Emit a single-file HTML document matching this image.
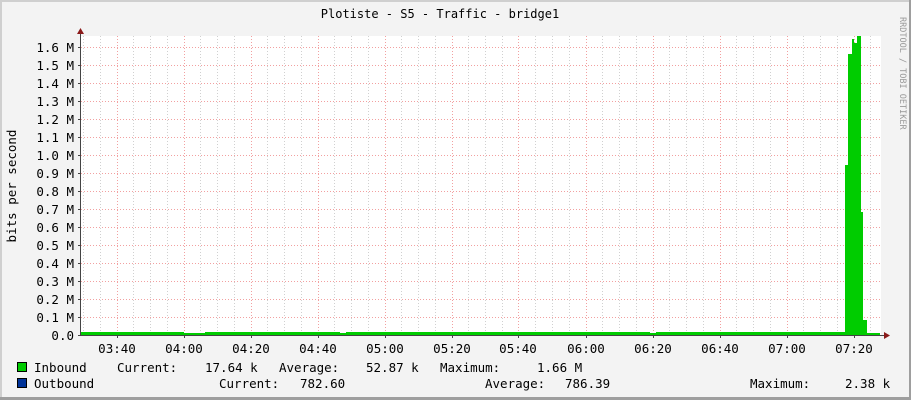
<!DOCTYPE html>
<html><head><meta charset="utf-8"><style>
html,body{margin:0;padding:0;background:#f3f3f3}
svg{display:block}
text{font-family:"DejaVu Sans Mono","Liberation Mono",monospace;font-size:12.5px;fill:#000}
</style></head><body>
<svg width="911" height="400" xmlns="http://www.w3.org/2000/svg">
<rect x="0" y="0" width="911" height="400" fill="#f3f3f3"/>
<rect x="0" y="0" width="911" height="2" fill="#cfcfcf"/>
<rect x="0" y="0" width="2" height="400" fill="#cfcfcf"/>
<rect x="909" y="0" width="2" height="400" fill="#9e9e9e"/>
<rect x="0" y="397" width="911" height="3" fill="#9e9e9e"/>
<rect x="81" y="36" width="800" height="299" fill="#fff"/>
<g stroke="#d0d0d0" stroke-dasharray="1,2" shape-rendering="crispEdges">
<path d="M83.5 36V335M100.5 36V335M133.5 36V335M150.5 36V335M167.5 36V335M200.5 36V335M217.5 36V335M234.5 36V335M267.5 36V335M284.5 36V335M301.5 36V335M334.5 36V335M351.5 36V335M368.5 36V335M401.5 36V335M418.5 36V335M435.5 36V335M468.5 36V335M485.5 36V335M502.5 36V335M535.5 36V335M552.5 36V335M569.5 36V335M602.5 36V335M619.5 36V335M636.5 36V335M669.5 36V335M686.5 36V335M703.5 36V335M736.5 36V335M753.5 36V335M770.5 36V335M803.5 36V335M820.5 36V335M837.5 36V335M870.5 36V335"/>
</g>
<g stroke="#f2a0a0" stroke-dasharray="1,2" shape-rendering="crispEdges">
<path d="M117.5 36V335M184.5 36V335M251.5 36V335M318.5 36V335M385.5 36V335M452.5 36V335M518.5 36V335M586.5 36V335M653.5 36V335M720.5 36V335M787.5 36V335M854.5 36V335"/>
<path d="M81 47.5H881M81 65.5H881M81 83.5H881M81 101.5H881M81 119.5H881M81 137.5H881M81 155.5H881M81 173.5H881M81 191.5H881M81 209.5H881M81 227.5H881M81 245.5H881M81 263.5H881M81 281.5H881M81 299.5H881M81 317.5H881"/>
</g>
<path fill="#00cc00" d="M81 332H184V333H205V332H340V333H346V332H650V333H656V332H845V165H848V54H852V39H854V43H857V36H861V212H863V320H867V333H880V335H81Z"/>
<g stroke="#444" shape-rendering="crispEdges">
<path d="M80.5 33V336M78 335.5H884"/>
<path d="M78 47.5h3M78 65.5h3M78 83.5h3M78 101.5h3M78 119.5h3M78 137.5h3M78 155.5h3M78 173.5h3M78 191.5h3M78 209.5h3M78 227.5h3M78 245.5h3M78 263.5h3M78 281.5h3M78 299.5h3M78 317.5h3"/>
<path d="M117.5 335v3M184.5 335v3M251.5 335v3M318.5 335v3M385.5 335v3M452.5 335v3M518.5 335v3M586.5 335v3M653.5 335v3M720.5 335v3M787.5 335v3M854.5 335v3"/>
</g>
<path d="M77 34L80.5 28L84 34Z" fill="#8b1a1a"/>
<path d="M884 332L890 335.5L884 339Z" fill="#8b1a1a"/>
<text x="440" y="18" text-anchor="middle" style="font-size:12px">Plotiste - S5 - Traffic - bridge1</text>
<g text-anchor="end">
<text x="74" y="52">1.6 M</text><text x="74" y="70">1.5 M</text><text x="74" y="88">1.4 M</text><text x="74" y="106">1.3 M</text>
<text x="74" y="124">1.2 M</text><text x="74" y="142">1.1 M</text><text x="74" y="160">1.0 M</text><text x="74" y="178">0.9 M</text>
<text x="74" y="196">0.8 M</text><text x="74" y="214">0.7 M</text><text x="74" y="232">0.6 M</text><text x="74" y="250">0.5 M</text>
<text x="74" y="268">0.4 M</text><text x="74" y="286">0.3 M</text><text x="74" y="304">0.2 M</text><text x="74" y="322">0.1 M</text>
<text x="74" y="340">0.0</text>
</g>
<g text-anchor="middle">
<text x="117" y="353">03:40</text><text x="184" y="353">04:00</text><text x="251" y="353">04:20</text><text x="318" y="353">04:40</text>
<text x="385" y="353">05:00</text><text x="452" y="353">05:20</text><text x="518" y="353">05:40</text><text x="586" y="353">06:00</text>
<text x="653" y="353">06:20</text><text x="720" y="353">06:40</text><text x="787" y="353">07:00</text><text x="854" y="353">07:20</text>
</g>
<text transform="translate(16,186) rotate(-90)" text-anchor="middle">bits per second</text>
<text transform="translate(900,17) rotate(90)" style="font-size:8.5px;fill:#999">RRDTOOL / TOBI OETIKER</text>
<rect x="17.5" y="362.5" width="9" height="9" fill="#00cc00" stroke="#000"/>
<rect x="17.5" y="378.5" width="9" height="9" fill="#003399" stroke="#000"/>
<text x="34" y="372">Inbound</text><text x="117" y="372">Current:</text><text x="205" y="372">17.64 k</text>
<text x="279" y="372">Average:</text><text x="366" y="372">52.87 k</text><text x="440" y="372">Maximum:</text><text x="537" y="372">1.66 M</text>
<text x="34" y="388">Outbound</text><text x="219" y="388">Current:</text><text x="300" y="388">782.60</text>
<text x="485" y="388">Average:</text><text x="565" y="388">786.39</text><text x="750" y="388">Maximum:</text><text x="845" y="388">2.38 k</text>
</svg>
</body></html>
